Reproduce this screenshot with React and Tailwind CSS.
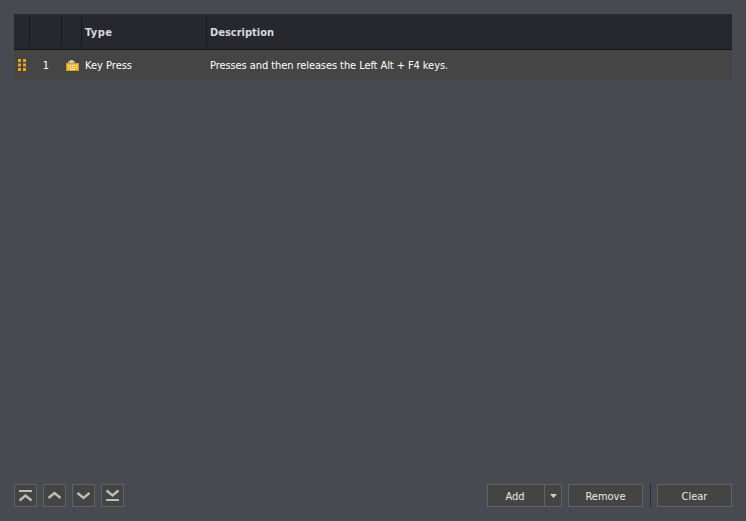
import React from "react";

function IconBtn({ children }) {
  return (
    <button className="w-[23px] h-[23px] border border-[#636363] bg-[#444444] flex items-center justify-center">
      <svg width="21" height="21" viewBox="0 0 21 21" fill="none" stroke="#bcbcbc" strokeWidth="2.4">
        {children}
      </svg>
    </button>
  );
}

function Th({ className, children }) {
  return (
    <div className={`h-full flex items-center ${className}`}>
      <div className="w-full h-[31px] border-r border-[#17181b] flex items-center pt-[3px] pl-[3px] font-bold text-[#d7d9dc] text-[11px] tracking-[0.4px]">
        {children}
      </div>
    </div>
  );
}

export default function App() {
  return (
    <div className="w-[746px] h-[521px] bg-[#474a51] flex flex-col p-[14px] font-['DejaVu_Sans',sans-serif] font-stretch-condensed text-[11px] overflow-hidden">
      <div className="h-[35px] bg-[#27282d] flex items-center">
        <Th className="w-[16px]" />
        <Th className="w-[32px]" />
        <Th className="w-[20px]" />
        <Th className="w-[125px]">Type</Th>
        <div className="pl-[3px] pt-[3px] font-bold text-[#d7d9dc]">Description</div>
      </div>
      <div className="h-[1px] bg-[#121316]" />
      <div className="h-[30px] bg-[#454545] flex items-center text-white">
        <div className="w-[16px] pl-[4px] flex">
          <svg width="8" height="12" viewBox="0 0 8 12" fill="#eea712">
            <rect x="0" y="0" width="3" height="3" />
            <rect x="5" y="0" width="3" height="3" />
            <rect x="0" y="4.5" width="3" height="3" />
            <rect x="5" y="4.5" width="3" height="3" />
            <rect x="0" y="9" width="3" height="3" />
            <rect x="5" y="9" width="3" height="3" />
          </svg>
        </div>
        <div className="w-[32px] text-center pt-[2px]">1</div>
        <div className="w-[20px] flex justify-center">
          <svg width="13" height="11" viewBox="0 0 13 11" shapeRendering="crispEdges">
            <rect x="2" y="1" width="2" height="2" fill="#a8a8a8" />
            <rect x="4" y="0" width="3" height="3" fill="#c8c8c8" />
            <rect x="7" y="1" width="2" height="2" fill="#a8a8a8" />
            <rect x="0" y="3" width="13" height="8" fill="#d69c1c" />
            <rect x="1" y="4" width="11" height="6" fill="#f0ba30" />
            <path d="M2 5 h1 M4 5 h1 M6 5 h1 M8 5 h1 M10 5 h1 M2 7 h1 M4 7 h1 M6 7 h1 M8 7 h1 M10 7 h1" transform="translate(0 .5)" stroke="#fff3c8" />
            <rect x="4" y="9" width="5" height="1" fill="#fff3c8" />
          </svg>
        </div>
        <div className="w-[125px] pl-[3px] pt-[2px]">Key Press</div>
        <div className="pl-[3px] pt-[2px] tracking-[-0.08px]">Presses and then releases the Left Alt + F4 keys.</div>
      </div>
      <div className="flex-1" />
      <div className="h-[23px] flex items-center text-[#e8e8e8]">
        <div className="flex gap-[6px]">
          <IconBtn>
            <path d="M4 6 H17" strokeWidth="2" />
            <path d="M4.5 15.5 L10.5 10.5 L16.5 15.5" />
          </IconBtn>
          <IconBtn>
            <path d="M4.5 13 L10.5 8 L16.5 13" />
          </IconBtn>
          <IconBtn>
            <path d="M4.5 8 L10.5 13 L16.5 8" />
          </IconBtn>
          <IconBtn>
            <path d="M4.5 5.5 L10.5 10.5 L16.5 5.5" />
            <path d="M4 15 H17" strokeWidth="2" />
          </IconBtn>
        </div>
        <div className="flex-1" />
        <div className="flex h-[23px] w-[75px] border border-[#636363] bg-[#444444]">
          <button className="w-[57px] pt-[3px] pr-[2px] border-r border-[#636363]">Add</button>
          <button className="flex-1 flex items-center justify-center">
            <svg width="7" height="4" viewBox="0 0 7 4" fill="#d0d0d0">
              <path d="M0 0 H7 L3.5 4 Z" />
            </svg>
          </button>
        </div>
        <button className="ml-[6px] w-[75px] h-[23px] pt-[3px] border border-[#636363] bg-[#444444]">Remove</button>
        <div className="ml-[7px] mr-[6px] w-[1px] h-[23px] bg-[#2a2b30]" />
        <button className="w-[75px] h-[23px] pt-[3px] border border-[#636363] bg-[#444444]">Clear</button>
      </div>
    </div>
  );
}
